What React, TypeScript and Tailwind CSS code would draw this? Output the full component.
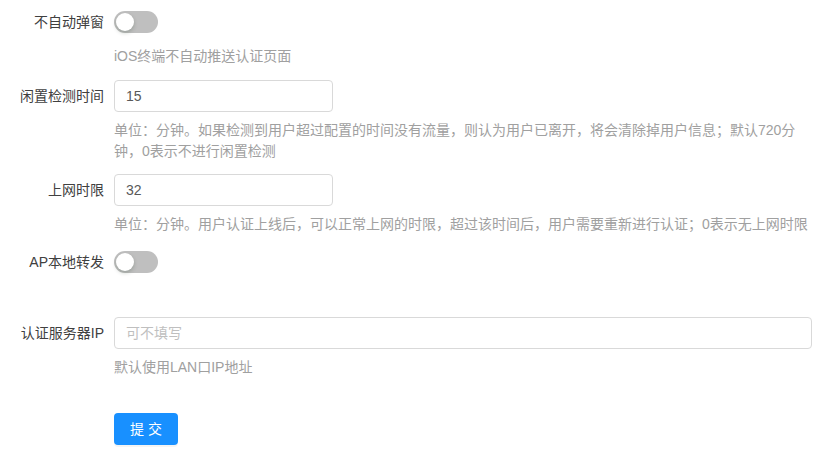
import { useState } from "react";

const FONT = { fontFamily: '"Liberation Sans", "Noto Sans CJK SC", sans-serif' };

function Switch({ on, onToggle }: { on: boolean; onToggle: () => void }) {
  return (
    <button
      type="button"
      onClick={onToggle}
      className={`relative h-[22px] w-[44px] rounded-full transition-colors ${
        on ? "bg-[#1890ff]" : "bg-[#bfbfbf]"
      }`}
    >
      <span
        className={`absolute top-[2px] h-[18px] w-[18px] rounded-full bg-white shadow-[0_2px_4px_0_rgba(0,35,11,0.2)] transition-all ${
          on ? "left-[24px]" : "left-[2px]"
        }`}
      />
    </button>
  );
}

function FormItem({
  label,
  help,
  className,
  children,
}: {
  label?: string;
  help?: string;
  className: string;
  children: React.ReactNode;
}) {
  return (
    <div className={`flex ${className}`}>
      <div className="w-[114px] shrink-0 pr-[10px] h-[40px] flex items-center justify-end text-[14px] text-[#404040]">
        {label}
      </div>
      <div className="w-[698px]">
        <div className="h-[40px] flex items-center">{children}</div>
        {help && <div className="mt-[4px] text-[14px] leading-[21px] text-[#a0a0a0]">{help}</div>}
      </div>
    </div>
  );
}

export default function App() {
  const [noPopup, setNoPopup] = useState(false);
  const [apLocal, setApLocal] = useState(false);
  const [idle, setIdle] = useState("15");
  const [limit, setLimit] = useState("32");
  const [serverIp, setServerIp] = useState("");

  const inputCls =
    "h-[32px] rounded-[4px] border border-[#d9d9d9] bg-white px-[11px] text-[14px] text-[#595959] outline-none placeholder:text-[#bfbfbf] focus:border-[#40a9ff]";

  return (
    <div className="min-h-screen w-[834px] bg-white pt-[2px]" style={FONT}>
      <FormItem label="不自动弹窗" help="iOS终端不自动推送认证页面" className="mb-[9px]">
        <Switch on={noPopup} onToggle={() => setNoPopup(!noPopup)} />
      </FormItem>

      <FormItem
        label="闲置检测时间"
        help="单位：分钟。如果检测到用户超过配置的时间没有流量，则认为用户已离开，将会清除掉用户信息；默认720分钟，0表示不进行闲置检测"
        className="mb-[8px]"
      >
        <input value={idle} onChange={(e) => setIdle(e.target.value)} className={`${inputCls} w-[219px]`} />
      </FormItem>

      <FormItem
        label="上网时限"
        help="单位：分钟。用户认证上线后，可以正常上网的时限，超过该时间后，用户需要重新进行认证；0表示无上网时限"
        className="mb-[7px]"
      >
        <input value={limit} onChange={(e) => setLimit(e.target.value)} className={`${inputCls} w-[219px]`} />
      </FormItem>

      <FormItem label="AP本地转发" className="mb-[31px]">
        <Switch on={apLocal} onToggle={() => setApLocal(!apLocal)} />
      </FormItem>

      <FormItem label="认证服务器IP" help="默认使用LAN口IP地址" className="mb-[31px]">
        <input
          value={serverIp}
          onChange={(e) => setServerIp(e.target.value)}
          placeholder="可不填写"
          className={`${inputCls} w-[698px]`}
        />
      </FormItem>

      <FormItem className="">
        <button
          type="button"
          className="h-[32px] w-[64px] rounded-[4px] bg-[#1890ff] text-[14px] text-white shadow-[0_2px_0_rgba(0,0,0,0.045)] hover:bg-[#40a9ff]"
        >
          提 交
        </button>
      </FormItem>
    </div>
  );
}
